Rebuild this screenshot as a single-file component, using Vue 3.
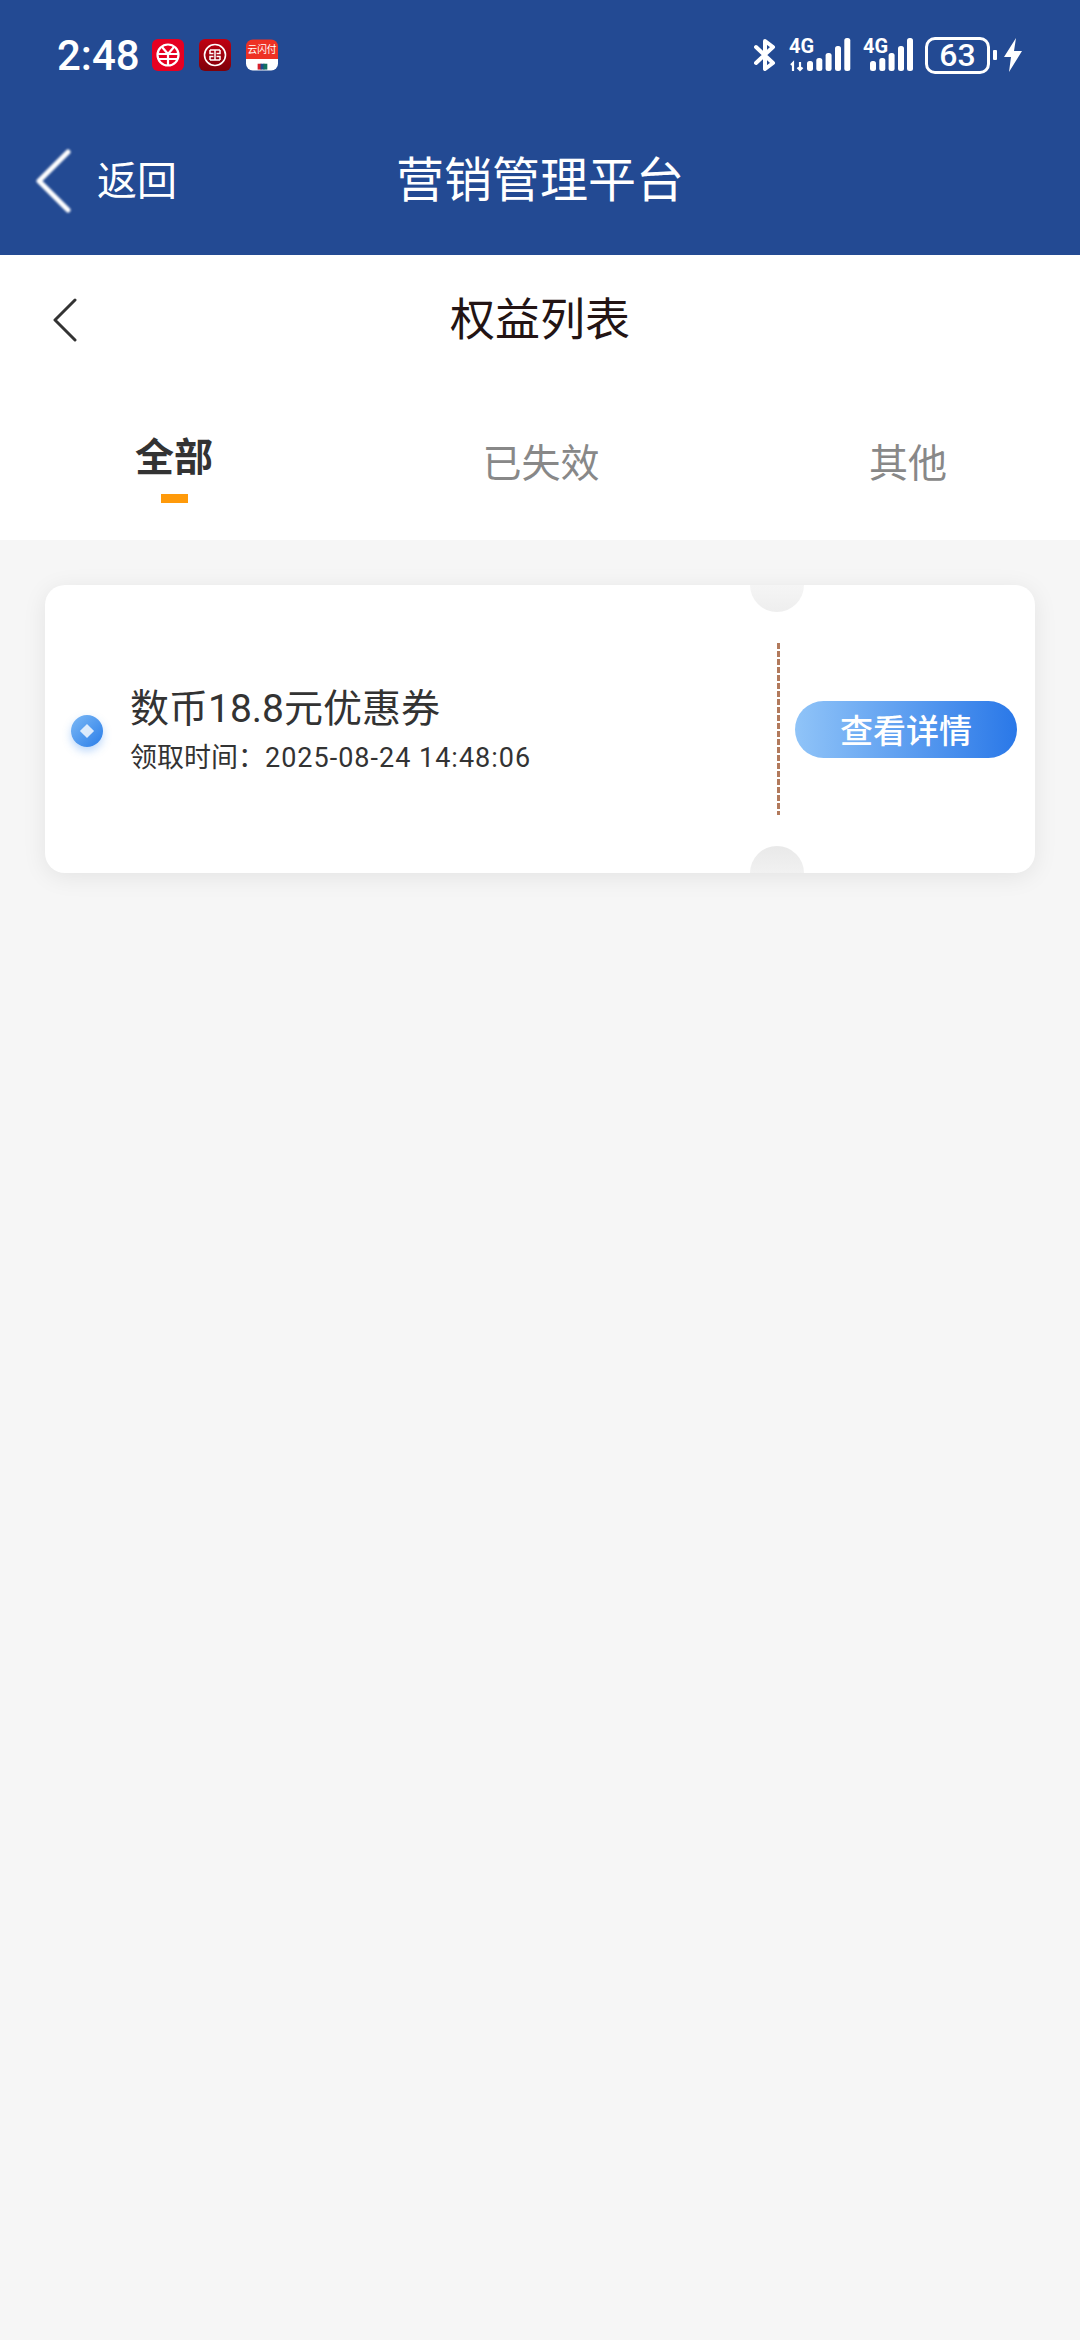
<template>
  <div class="page">
    <header class="app-header">
      <div class="status-bar">
        <span class="clock">2:48</span>
        <div class="notify-icons">
          <svg class="notify" viewBox="0 0 32 32">
            <rect width="32" height="32" rx="6" fill="#e60021" />
            <circle cx="16" cy="16" r="10.5" fill="none" stroke="#fff" stroke-width="2.2" />
            <path d="M10 8l6 7 6-7M6 15h20M6 20h20M16 15v11" fill="none" stroke="#fff" stroke-width="2.2" />
          </svg>
          <svg class="notify" viewBox="0 0 32 32">
            <defs>
              <linearGradient id="icbc" x1="0" y1="0" x2="0" y2="1">
                <stop offset="0" stop-color="#c00012" />
                <stop offset="1" stop-color="#7e000a" />
              </linearGradient>
            </defs>
            <rect width="32" height="32" rx="6" fill="url(#icbc)" />
            <circle cx="16" cy="16" r="10.5" fill="none" stroke="#fff" stroke-width="1.6" />
            <path d="M11 11h10M11 21h10M11 11v3.5h3.5M21 11v3.5h-3.5M11 21v-3.5h3.5M21 21v-3.5h-3.5M16 11v10" fill="none" stroke="#fff" stroke-width="1.5" />
          </svg>
          <svg class="notify" viewBox="0 0 33 32">
            <path d="M0 20V7a7 7 0 0 1 7-7h19a7 7 0 0 1 7 7v13z" fill="#ee3124" />
            <path d="M0 20h33v5a7 7 0 0 1-7 7H7a7 7 0 0 1-7-7z" fill="#fff" />
            <text x="16.5" y="14" class="unionpay">云闪付</text>
            <rect x="12" y="25" width="4" height="6" fill="#d7202a" />
            <rect x="15" y="25" width="4" height="6" fill="#1c4c8c" />
            <rect x="18" y="25" width="4" height="6" fill="#11725f" />
          </svg>
        </div>
        <div class="status-right">
          <svg class="bt" viewBox="0 0 22 32">
            <path d="M2 8l17 16-8 6V2l8 6L2 24" fill="none" stroke="#fff" stroke-width="4" stroke-linecap="round" stroke-linejoin="round" />
          </svg>
          <svg class="signal signal-a" viewBox="0 -6 62 40">
            <text x="0" y="15" class="net">4G</text>
            <path d="M4 33v-8l-2 2M11 24v8m-2.500-2.500l2.500 2.500 2.500-2.500" fill="none" stroke="#fff" stroke-width="2.200" />
            <rect x="18" y="23" width="6" height="10" rx="2.500" fill="#fff" />
            <rect x="27.300" y="20" width="6" height="13" rx="2.500" fill="#fff" />
            <rect x="36.600" y="15" width="6" height="18" rx="2.500" fill="#fff" />
            <rect x="46" y="8" width="6" height="25" rx="2.500" fill="#fff" />
            <rect x="55.300" y="0" width="6" height="33" rx="2.500" fill="#fff" />
          </svg>
          <svg class="signal signal-b" viewBox="0 -6 50 40">
            <text x="0" y="15" class="net">4G</text>
            <rect x="7" y="23" width="6" height="10" rx="2.500" fill="#fff" />
            <rect x="16.300" y="20" width="6" height="13" rx="2.500" fill="#fff" />
            <rect x="25.600" y="15" width="6" height="18" rx="2.500" fill="#fff" />
            <rect x="35" y="8" width="6" height="25" rx="2.500" fill="#fff" />
            <rect x="44" y="0" width="6" height="33" rx="2.500" fill="#fff" />
          </svg>
          <div class="battery">63</div>
          <span class="battery-nub"></span>
          <svg class="bolt" viewBox="0 0 18 34">
            <path d="M12 0L0 19h7l-2 15L18 13h-8z" fill="#fff" />
          </svg>
        </div>
      </div>
      <div class="webview-nav">
        <svg class="webview-back" viewBox="0 0 40 68">
          <path d="M35 4L6 33l29 29" fill="none" stroke="#fff" stroke-width="5" stroke-linecap="round" stroke-linejoin="round" />
        </svg>
        <span class="webview-back-text">返回</span>
        <span class="webview-title">营销管理平台</span>
      </div>
    </header>

    <div class="title-bar">
      <svg class="back" viewBox="0 0 26 44">
        <path d="M23 2L3 22l20 20" fill="none" stroke="#333" stroke-width="3" stroke-linecap="round" stroke-linejoin="round" />
      </svg>
      <h1>权益列表</h1>
    </div>

    <nav class="tabs">
      <div v-for="tab in tabs" :key="tab" class="tab" :class="{ active: tab === active }">
        <span>{{ tab }}</span>
        <i v-if="tab === active" class="tab-line"></i>
      </div>
    </nav>

    <main class="list">
      <section v-for="item in coupons" :key="item.name" class="ticket">
        <span class="notch notch-top"></span>
        <span class="notch notch-bottom"></span>
        <span class="coin"><i></i></span>
        <div class="ticket-info">
          <div class="ticket-name">{{ item.name }}</div>
          <div class="ticket-time">领取时间：<span class="ticket-date">{{ item.time }}</span></div>
        </div>
        <span class="divider"></span>
        <button class="detail-btn">查看详情</button>
      </section>
    </main>
  </div>
</template>

<script setup>
import { ref } from 'vue';

const tabs = ['全部', '已失效', '其他'];
const active = ref('全部');

const coupons = [
  { name: '数币18.8元优惠券', time: '2025-08-24 14:48:06' }
];
</script>

<style>
html,
body {
  margin: 0;
  background: #f6f6f6;
}
</style>

<style scoped>
.page {
  min-height: 100vh;
  background: #f6f6f6;
  font-family: Roboto, "Noto Sans CJK SC", sans-serif;
}
.app-header {
  height: 255px;
  background: #234a93;
  color: #fff;
}
.status-bar {
  height: 110px;
  display: flex;
  align-items: center;
  padding: 0 58px 0 57px;
  box-sizing: border-box;
}
.clock {
  font-size: 42px;
  font-weight: 500;
  width: 95px;
}
.notify-icons {
  display: flex;
  gap: 15px;
}
.notify {
  width: 32px;
  height: 32px;
  display: block;
}
.unionpay {
  font-size: 10px;
  fill: #fff;
  text-anchor: middle;
}
.status-right {
  margin-left: auto;
  display: flex;
  align-items: center;
}
.bt {
  width: 22px;
  height: 32px;
}
.signal {
  height: 40px;
  margin-top: -6px;
}
.signal-a {
  width: 62px;
  margin-left: 13px;
}
.signal-b {
  width: 50px;
  margin-left: 12px;
}
.net {
  font-size: 20px;
  font-weight: 700;
  fill: #fff;
}
.battery {
  width: 65px;
  height: 37px;
  margin-left: 12px;
  box-sizing: border-box;
  border: 3px solid #fff;
  border-radius: 10px;
  font-size: 32px;
  font-weight: 500;
  line-height: 31px;
  text-align: center;
}
.battery-nub {
  width: 4px;
  height: 10px;
  margin-left: 3px;
  background: #fff;
  border-radius: 1px;
}
.bolt {
  width: 18px;
  height: 34px;
  margin-left: 7px;
}
.webview-nav {
  height: 145px;
  position: relative;
  display: flex;
  align-items: center;
  justify-content: center;
  padding-bottom: 4px;
  box-sizing: border-box;
}
.webview-back {
  position: absolute;
  left: 33px;
  top: 38px;
  width: 40px;
  height: 68px;
  filter: blur(0.8px);
}
.webview-back-text {
  position: absolute;
  left: 97px;
  top: 45px;
  font-size: 40px;
  line-height: 54px;
}
.webview-title {
  font-size: 48px;
  line-height: 60px;
}
.title-bar {
  height: 130px;
  background: #fff;
  position: relative;
  display: flex;
  align-items: center;
  justify-content: center;
  padding-top: 1px;
  box-sizing: border-box;
}
.title-bar h1 {
  margin: 0;
  font-size: 45px;
  font-weight: 400;
  color: #231414;
  line-height: 60px;
}
.back {
  position: absolute;
  left: 52px;
  top: 43px;
  width: 26px;
  height: 44px;
}
.tabs {
  height: 155px;
  background: #fff;
  display: flex;
  justify-content: space-between;
  padding: 0 133px 0 135px;
  box-sizing: border-box;
}
.tab {
  position: relative;
  padding-top: 54px;
  font-size: 39px;
  line-height: 50px;
  color: #888;
}
.tab.active {
  padding-top: 48px;
  color: #333;
  font-weight: 700;
}
.tab-line {
  display: block;
  width: 27px;
  height: 9px;
  margin: 11px auto 0;
  background: #ff9a0a;
}
.list {
  padding: 45px 45px 0;
}
.ticket {
  position: relative;
  height: 288px;
  display: flex;
  align-items: center;
  padding: 0 18px 0 26px;
  background: #fff;
  border-radius: 20px;
  box-shadow: 0 4px 24px rgba(0, 0, 0, 0.08);
}
.notch {
  position: absolute;
  left: 705px;
  width: 54px;
  height: 27px;
}
.notch-top {
  top: 0;
  border-radius: 0 0 27px 27px;
  background: linear-gradient(#f5f5f5, #eeeeee);
}
.notch-bottom {
  bottom: 0;
  border-radius: 27px 27px 0 0;
  background: linear-gradient(#e9e9e9, #f1f1f1);
}
.coin {
  width: 32px;
  height: 32px;
  flex: none;
  margin-top: 4px;
  display: flex;
  align-items: center;
  justify-content: center;
  border-radius: 50%;
  background: linear-gradient(135deg, #7cb9f6, #2a7de8);
  box-shadow: 0 4px 8px rgba(60, 140, 240, 0.35);
}
.coin i {
  width: 10px;
  height: 10px;
  background: rgba(255, 255, 255, 0.8);
  transform: rotate(45deg);
}
.ticket-info {
  flex: 1;
  margin-left: 27px;
  margin-top: 0;
  color: #333;
}
.ticket-name {
  font-size: 39px;
  line-height: 50px;
}
.ticket-time {
  font-size: 27px;
  line-height: 34px;
  margin-top: 7px;
}
.ticket-date {
  letter-spacing: 1px;
}
.divider {
  width: 3px;
  height: 172px;
  flex: none;
  background: repeating-linear-gradient(#b27a5c 0 6px, transparent 6px 8px);
}
.detail-btn {
  width: 222px;
  height: 57px;
  flex: none;
  margin-left: 15px;
  padding: 0;
  border: 0;
  border-radius: 29px;
  background: linear-gradient(90deg, #90c4f8, #2a78e8);
  color: #fff;
  font-family: inherit;
  font-size: 33px;
  font-weight: 500;
}
</style>
